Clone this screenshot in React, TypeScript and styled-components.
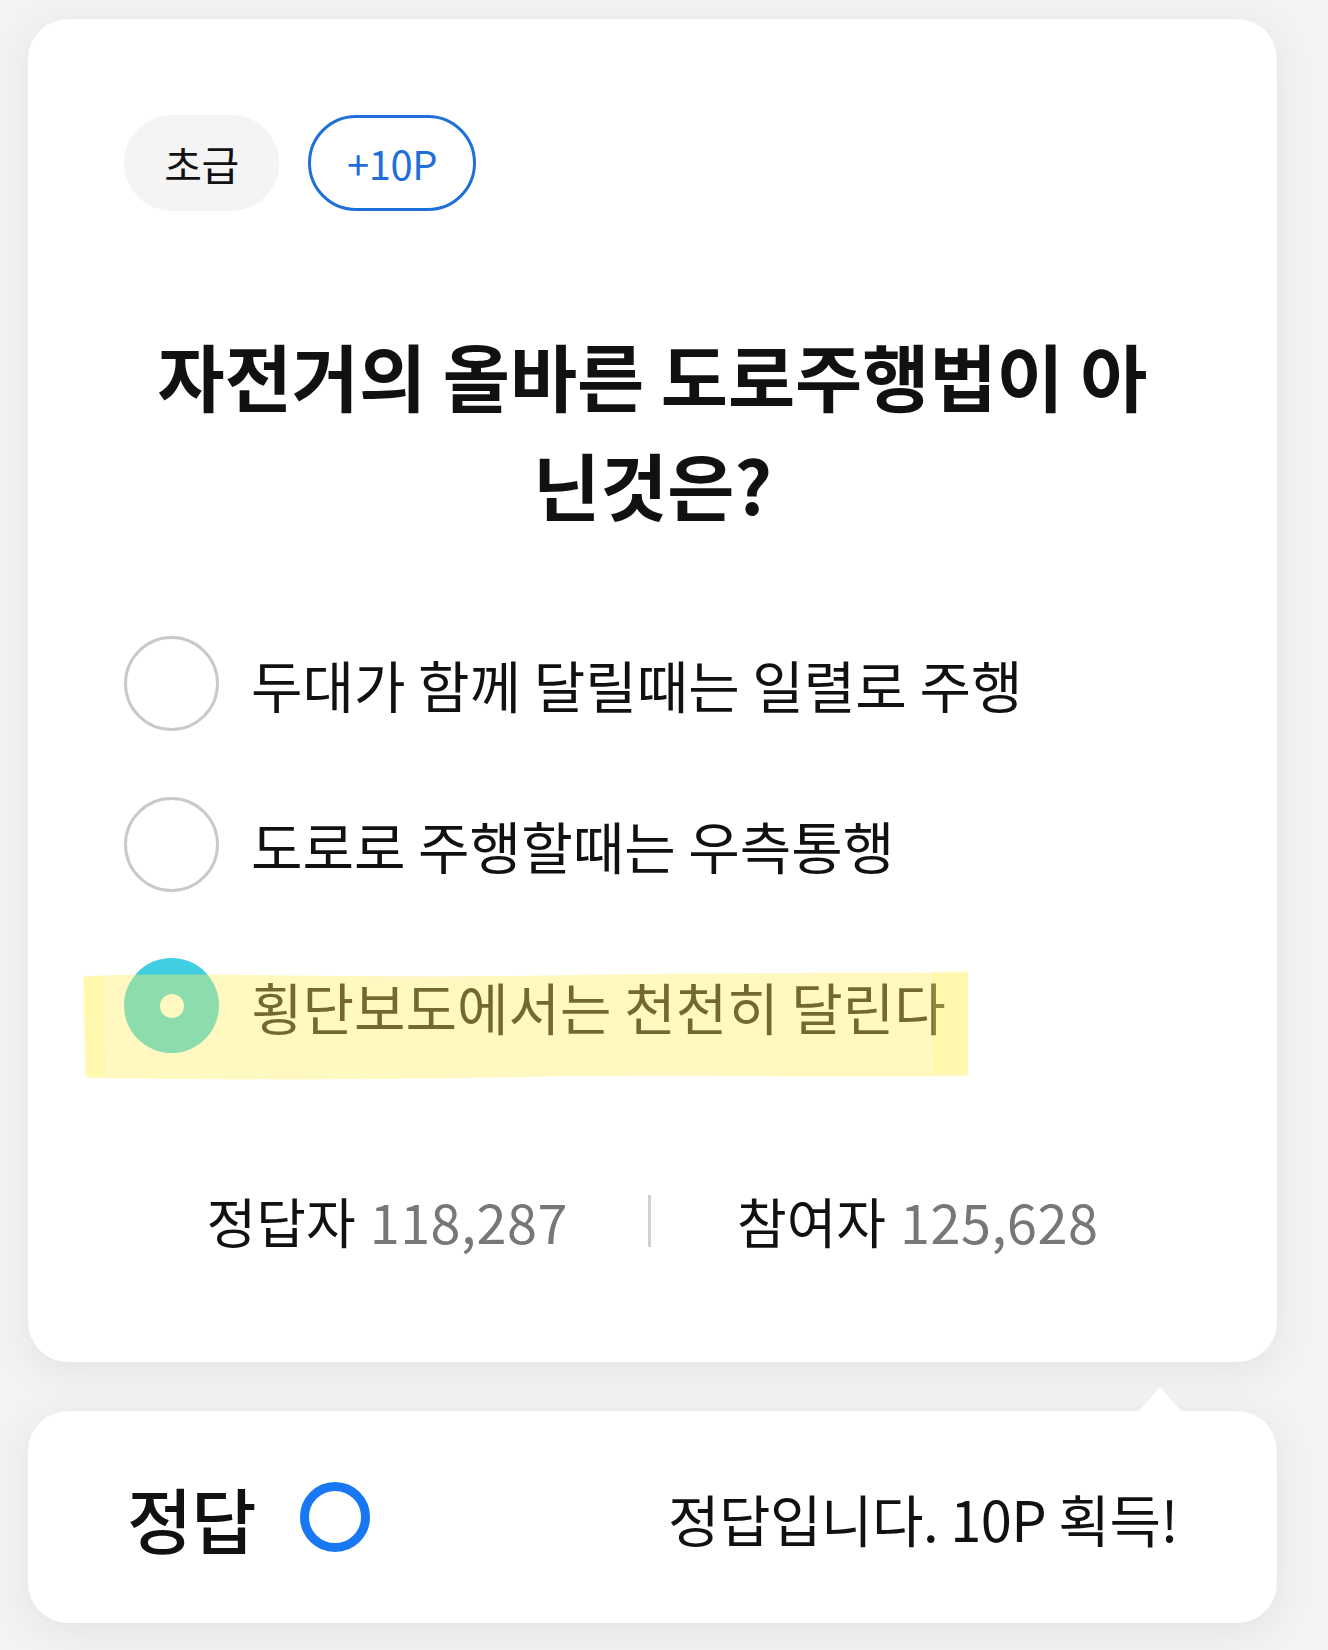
import React from "react";
import styled, { createGlobalStyle } from "styled-components";

const GlobalStyle = createGlobalStyle`
  html, body {
    margin: 0;
    padding: 0;
    background: #f3f3f3;
  }
  body {
    font-family: "Noto Sans CJK KR", "Noto Sans", sans-serif;
    color: #111;
  }
`;

const Page = styled.div`
  width: 1249px;
  padding: 19px 0 27px 28px;
  display: flex;
  flex-direction: column;
  gap: 49px;
`;

const Card = styled.div`
  background: #fff;
  border-radius: 40px;
  box-shadow: 0 8px 40px rgba(0, 0, 0, 0.07);
`;

const QuizCard = styled(Card)`
  padding: 96px 96px 111px 96px;
  display: flex;
  flex-direction: column;
`;

const BadgeRow = styled.div`
  display: flex;
  gap: 29px;
`;

const Badge = styled.div<{ $outlined?: boolean }>`
  box-sizing: border-box;
  width: ${(p) => (p.$outlined ? "168px" : "155px")};
  height: 96px;
  border-radius: 48px;
  display: flex;
  align-items: center;
  justify-content: center;
  font-size: ${(p) => (p.$outlined ? "40px" : "41px")};
  letter-spacing: -0.5px;
  background: ${(p) => (p.$outlined ? "#fff" : "#f4f4f4")};
  color: ${(p) => (p.$outlined ? "#1f6fd9" : "#111")};
  border: ${(p) => (p.$outlined ? "3px solid #1f6fd9" : "none")};
`;

const Title = styled.h1`
  margin: 109px 0 0;
  padding: 0 20px;
  font-size: 73px;
  line-height: 109px;
  font-weight: 700;
  text-align: center;
  color: #111;
`;

const OptionList = styled.div`
  margin-top: 98px;
  display: flex;
  flex-direction: column;
  gap: 66px;
`;

const OptionRow = styled.div`
  position: relative;
  height: 95px;
  display: flex;
  align-items: center;
  gap: 32px;
`;

const Radio = styled.div<{ $checked?: boolean }>`
  box-sizing: border-box;
  flex: none;
  width: 95px;
  height: 95px;
  border-radius: 50%;
  display: flex;
  align-items: center;
  justify-content: center;
  background: ${(p) => (p.$checked ? "#40cfe0" : "#fff")};
  border: ${(p) => (p.$checked ? "none" : "3px solid #c9c9c9")};
`;

const RadioDot = styled.div`
  width: 24px;
  height: 24px;
  border-radius: 50%;
  background: #fff;
`;

const OptionText = styled.span`
  font-size: 56px;
  line-height: 70px;
  color: #111;
`;

const Highlight = styled.svg`
  position: absolute;
  left: -42px;
  top: 12px;
  width: 890px;
  height: 112px;
  pointer-events: none;
`;

const Stats = styled.div`
  margin-top: 138px;
  display: flex;
  justify-content: center;
  align-items: center;
  font-size: 54px;
  line-height: 60px;
`;

const StatGroup = styled.div`
  display: flex;
  align-items: baseline;
  gap: 14px;
`;

const StatLabel = styled.span`
  color: #111;
`;

const StatValue = styled.span`
  color: #777;
  letter-spacing: 0.5px;
`;

const Divider = styled.div`
  width: 3px;
  height: 52px;
  background: #d0d0d0;
  margin: 0 86px 0 80px;
`;

const ResultCard = styled(Card)`
  position: relative;
  height: 212px;
  padding: 0 99px;
  display: flex;
  align-items: center;
  justify-content: space-between;

  &::before {
    content: "";
    position: absolute;
    top: -24px;
    right: 96px;
    border-left: 21px solid transparent;
    border-right: 21px solid transparent;
    border-bottom: 24px solid #fff;
  }
`;

const ResultLeft = styled.div`
  display: flex;
  align-items: center;
  gap: 44px;
`;

const ResultLabel = styled.span`
  font-size: 71px;
  font-weight: 500;
  letter-spacing: -1px;
  color: #111;
`;

const Ring = styled.div`
  box-sizing: border-box;
  width: 70px;
  height: 70px;
  border-radius: 50%;
  border: 9px solid #1877f2;
`;

const ResultMessage = styled.span`
  font-size: 56px;
  color: #111;
  letter-spacing: -0.5px;
`;

const options = [
  "두대가 함께 달릴때는 일렬로 주행",
  "도로로 주행할때는 우측통행",
  "횡단보도에서는 천천히 달린다",
];

export default function App() {
  return (
    <>
      <GlobalStyle />
      <Page>
        <QuizCard>
          <BadgeRow>
            <Badge>초급</Badge>
            <Badge $outlined>+10P</Badge>
          </BadgeRow>
          <Title>자전거의 올바른 도로주행법이 아닌것은?</Title>
          <OptionList>
            {options.map((text, i) => {
              const checked = i === 2;
              return (
                <OptionRow key={text}>
                  <Radio $checked={checked}>{checked && <RadioDot />}</Radio>
                  <OptionText>{text}</OptionText>
                  {checked && (
                    <Highlight viewBox="0 0 890 112" preserveAspectRatio="none">
                      <path
                        d="M2 6 C 120 2, 260 8, 420 6 S 700 2, 886 3 L 886 106 C 760 108, 600 104, 440 107 S 150 110, 4 108 Z"
                        fill="rgba(255,240,100,0.4)"
                      />
                      <path
                        d="M0 8 L 22 6 L 24 106 L 2 104 Z"
                        fill="rgba(255,240,100,0.2)"
                      />
                      <path
                        d="M850 1 L 886 0 L 886 103 L 852 104 Z"
                        fill="rgba(255,240,100,0.22)"
                      />
                    </Highlight>
                  )}
                </OptionRow>
              );
            })}
          </OptionList>
          <Stats>
            <StatGroup>
              <StatLabel>정답자</StatLabel>
              <StatValue>118,287</StatValue>
            </StatGroup>
            <Divider />
            <StatGroup>
              <StatLabel>참여자</StatLabel>
              <StatValue>125,628</StatValue>
            </StatGroup>
          </Stats>
        </QuizCard>
        <ResultCard>
          <ResultLeft>
            <ResultLabel>정답</ResultLabel>
            <Ring />
          </ResultLeft>
          <ResultMessage>정답입니다. 10P 획득!</ResultMessage>
        </ResultCard>
      </Page>
    </>
  );
}
